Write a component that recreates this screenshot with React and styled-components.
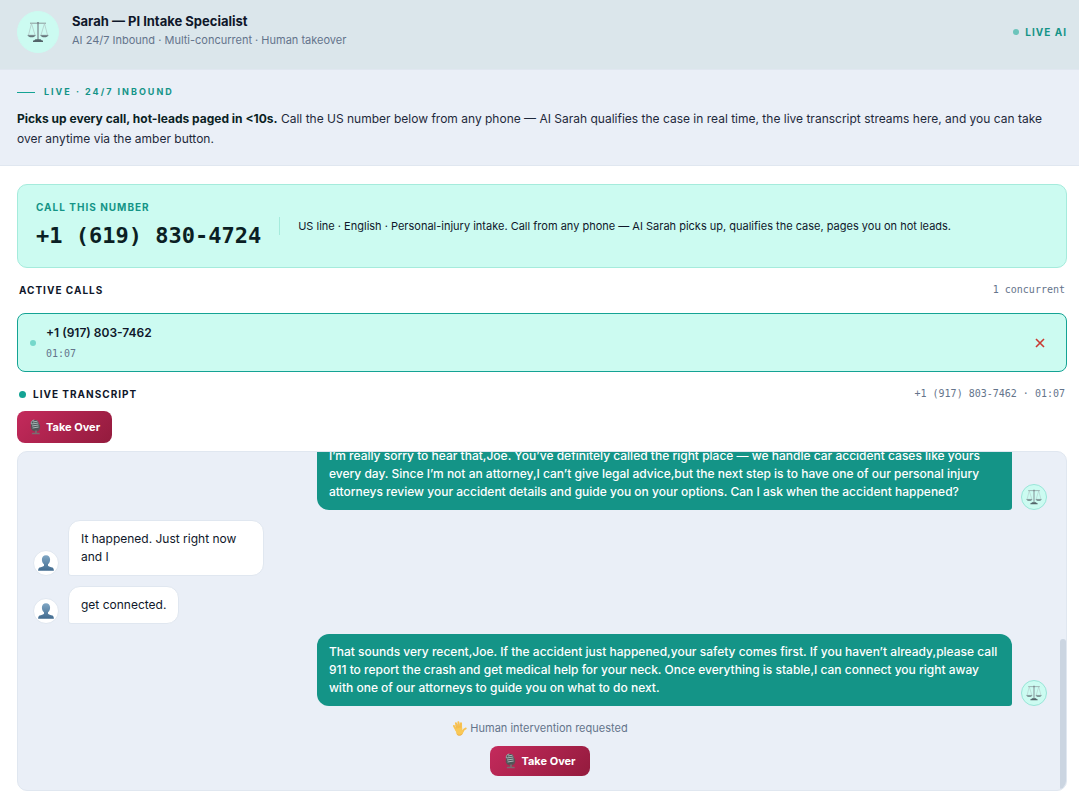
import React from "react";
import styled, { createGlobalStyle } from "styled-components";

const GlobalStyle = createGlobalStyle`
	:root {
		--accent: #149487;
		--accent-bright: #14a394;
		--mint: #ccfbf1;
		--mint-border: #a5ebdc;
		--surface: #eaeff7;
		--border: #e0e7f0;
		--dark: #0f172a;
		--muted: #64748b;
		--sans: Inter, "Open Sans", sans-serif;
		--mono: "DejaVu Sans Mono", "Liberation Mono", monospace;
	}

	* {
		box-sizing: border-box;
	}

	body {
		margin: 0;
		background: #fff;
		color: var(--dark);
		font-family: var(--sans);
		font-size: 12px;
		line-height: 18px;
	}

	h1, h2, p {
		margin: 0;
	}

	button {
		font-family: inherit;
		border: 0;
		cursor: pointer;
	}
`;

const Header = styled.header`
	display: flex;
	align-items: center;
	gap: 13px;
	padding: 11px 12px 16px 17px;
	background: #dbe6eb;
	border-bottom: 1px solid var(--border);
`;

const Avatar = styled.div`
	display: flex;
	align-items: center;
	justify-content: center;
	flex: none;
	width: ${(p) => p.$size}px;
	height: ${(p) => p.$size}px;
	border-radius: 50%;
	background: ${(p) => (p.$plain ? "#fff" : "var(--mint)")};
	border: 1px solid ${(p) => p.$border || "var(--mint)"};
`;

const Identity = styled.div`
	flex: 1;
	align-self: flex-start;

	h1 {
		font-size: 13px;
		font-weight: 700;
		line-height: 20px;
	}

	p {
		font-size: 11px;
		color: var(--muted);
	}
`;

const Label = styled.div`
	display: flex;
	align-items: center;
	font-size: ${(p) => (p.$wide ? 9 : 10)}px;
	font-weight: 700;
	line-height: ${(p) => p.$line || 16}px;
	letter-spacing: ${(p) => (p.$wide ? 2 : 1)}px;
	color: ${(p) => (p.$accent ? "var(--accent)" : "var(--dark)")};
	gap: ${(p) => p.$gap || 0}px;
`;

const Dot = styled.span`
	flex: none;
	width: ${(p) => p.$size || 6}px;
	height: ${(p) => p.$size || 6}px;
	border-radius: 50%;
	background: ${(p) => p.$color || "var(--accent-bright)"};
`;

const Dash = styled.span`
	width: 18px;
	height: 1px;
	background: var(--accent-bright);
`;

const Intro = styled.section`
	padding: 14px 12px 16px 17px;
	background: var(--surface);
	border-bottom: 1px solid var(--border);

	p {
		margin-top: 9px;
		line-height: 20px;
		color: #1e293b;
	}

	strong {
		color: #0b1f24;
	}
`;

const Content = styled.main`
	display: flex;
	flex-direction: column;
	padding: 18px 12px 14px 17px;
`;

const NumberCard = styled.section`
	display: flex;
	align-items: center;
	gap: 18px;
	padding: 15px 18px;
	background: var(--mint);
	border: 1px solid var(--mint-border);
	border-radius: 10px;
`;

const PhoneNumber = styled.div`
	margin-top: 6px;
	font-family: var(--mono);
	font-size: 22px;
	font-weight: 700;
	line-height: 32px;
	white-space: nowrap;
	color: #0b1f24;
`;

const Divider = styled.span`
	flex: none;
	width: 1px;
	height: 18px;
	background: var(--mint-border);
`;

const CardText = styled.p`
	font-size: 11px;
`;

const SectionHead = styled.div`
	display: flex;
	align-items: center;
	justify-content: space-between;
	padding: 0 2px;
	margin: 14px 0 ${(p) => p.$bottom}px;
`;

const Meta = styled.span`
	font-family: var(--mono);
	font-size: 10px;
	line-height: 16px;
	color: var(--muted);
`;

const CallRow = styled.div`
	display: flex;
	align-items: center;
	gap: 10px;
	padding: 9px 20px 9px 12px;
	background: var(--mint);
	border: 1px solid var(--accent-bright);
	border-radius: 8px;
`;

const CallInfo = styled.div`
	display: flex;
	flex-direction: column;
	flex: 1;
	gap: 3px;

	strong {
		font-weight: 600;
		line-height: 20px;
	}
`;

const CloseButton = styled.button`
	display: flex;
	padding: 0;
	background: none;
`;

const TakeOverButton = styled.button`
	display: flex;
	align-items: center;
	align-self: flex-start;
	gap: 4px;
	height: ${(p) => (p.$small ? 30 : 32)}px;
	padding: 0 ${(p) => (p.$small ? 14 : 12)}px;
	border-radius: 8px;
	background: linear-gradient(135deg, #c42a5c, #931b3d);
	color: #fff;
	font-size: 11px;
	font-weight: 700;
`;

const Transcript = styled.section`
	position: relative;
	display: flex;
	flex-direction: column;
	justify-content: flex-end;
	gap: 10px;
	height: 340px;
	margin-top: 8px;
	padding: 14px 19px 14px 15px;
	overflow: hidden;
	background: var(--surface);
	border: 1px solid var(--border);
	border-radius: 10px;
`;

const ScrollThumb = styled.div`
	position: absolute;
	right: 0;
	bottom: 0;
	width: 6px;
	height: 151px;
	border-radius: 3px;
	background: #cbd5e1;
`;

const Message = styled.div`
	display: flex;
	flex-direction: ${(p) => (p.$agent ? "row-reverse" : "row")};
	align-self: ${(p) => (p.$agent ? "flex-end" : "flex-start")};
	align-items: flex-end;
	gap: 9px;
	max-width: 72%;
`;

const Bubble = styled.p`
	padding: 9px 12px;
	border-radius: 12px;
`;

const AgentBubble = styled(Bubble)`
	background: var(--accent);
	color: #fff;
	font-weight: 500;
	border-bottom-right-radius: 3px;
`;

const CallerBubble = styled(Bubble)`
	max-width: 196px;
	background: #fff;
	border: 1px solid var(--border);
	border-bottom-left-radius: 3px;
`;

const Handoff = styled.div`
	display: flex;
	flex-direction: column;
	align-items: center;
	gap: 9px;
	padding-top: 3px;

	p {
		display: flex;
		align-items: center;
		gap: 3px;
		font-size: 11px;
		color: var(--muted);
	}

	button {
		align-self: center;
	}
`;

function ScalesIcon({ size }) {
	return (
		<svg width={size} height={size} viewBox="0 0 22 22" fill="none" aria-hidden="true">
			<path d="M3 2.2h16" stroke="#8b9a9c" strokeWidth="1" />
			<path d="M4.500 2.500 1.500 14M4.500 2.500 8 14M17.500 2.500 14 14M17.500 2.500 20.500 14" stroke="#a9babb" strokeWidth=".6" />
			<path d="M11 1v18" stroke="#8a9a9e" strokeWidth="1.500" />
			<circle cx="11" cy="2.200" r="1.100" fill="#7f8f93" />
			<path d="M.5 14h8.200c-.6 1.700-2 2.300-4.100 2.300S1 15.700.5 14ZM13.300 14h8.200c-.5 1.700-2 2.300-4.100 2.300s-3.500-.6-4.100-2.300Z" fill="#65777b" />
			<path d="M.7 14.200h7.800M13.500 14.200h7.800" stroke="#9eafb2" strokeWidth=".6" />
			<path d="M8.500 18.300h5l1.500 1.200h1V21H6v-1.500h1Z" fill="#536469" />
		</svg>
	);
}

function PersonIcon() {
	return (
		<svg width="16" height="16" viewBox="0 0 16 16" aria-hidden="true">
			<defs>
				<linearGradient id="bust" x1="0" y1="0" x2="0" y2="1">
					<stop offset="0" stopColor="#7fa6c4" />
					<stop offset="1" stopColor="#426b8f" />
				</linearGradient>
			</defs>
			<path
				fill="url(#bust)"
				d="M8 .2c2.600 0 4.200 1.900 4.100 4.500-.1 2-.9 3.500-2.100 4.600v1.400c.5 1 3 1.100 4.500 1.900.9.5 1.300 1.500 1.400 3.200H.1c.1-1.700.5-2.700 1.400-3.200 1.500-.8 4-.9 4.500-1.900V9.300C4.800 8.200 4 6.700 3.900 4.700 3.800 2.100 5.400.2 8 .2Z"
			/>
		</svg>
	);
}

function MicIcon() {
	return (
		<svg width="13" height="16" viewBox="0 0 13 16" fill="none" aria-hidden="true">
			<path d="M10.300 5.500c1 4.200-.4 6.500-3.300 6.500-2.800 0-4.500-1.500-5-4.500" stroke="#5d5558" strokeWidth="1.200" />
			<rect x="2" y="1" width="8" height="10.500" rx="4" fill="#4d5759" transform="rotate(-8 6 6)" />
			<path d="M2.300 5.200c-.3-2.600 1-4 3-4.200" stroke="#a3adae" strokeWidth="1" />
			<path d="m4 3 4.500-.8M2.800 5l6.600-1M3 7l6.600-1M3.500 9l6.200-1" stroke="#b3c0c1" strokeWidth=".9" />
			<path d="M7 11.500v2.500" stroke="#777173" strokeWidth="1.600" />
			<path d="M3.300 13.700h7l.7 1.600H2.600Z" fill="#7b6c71" />
		</svg>
	);
}

function HandIcon() {
	return (
		<svg width="15" height="15" viewBox="0 0 15 15" fill="none" aria-hidden="true">
			<path
				d="M4.200 9 2 5M5.700 8 3.900 2.300M7.300 7.500 6.400 1.300M9.100 7.500 9 2.200M10 11.300c1.300-2.300 2-3.700 3.700-3.900"
				stroke="#f8c250"
				strokeWidth="2"
				strokeLinecap="round"
			/>
			<path d="M3.300 7.800 10.100 6.500l.3 2.800 1.300.8c-.7 3.200-2.200 4.500-4.300 4.500-2.600 0-3.400-2.800-4.100-6.800Z" fill="#f9c856" />
			<path d="M4.700 7.300 3.300 3.900M6.200 6.800 5.200 2.600M8.100 6.600l-.3-4" stroke="#e5a43b" strokeWidth=".4" />
			<path d="M4.500 12.700c1.300 2 4.200 2.200 6 0" stroke="#e6a23a" strokeWidth=".7" />
		</svg>
	);
}

function CloseIcon() {
	return (
		<svg width="12" height="12" viewBox="0 0 12 12" aria-hidden="true">
			<path d="m2 2 8 8M10 2l-8 8" stroke="#c93a32" strokeWidth="1.600" />
		</svg>
	);
}

const messages = [
	{
		agent: true,
		text: "I’m really sorry to hear that,Joe. You’ve definitely called the right place — we handle car accident cases like yours every day. Since I’m not an attorney,I can’t give legal advice,but the next step is to have one of our personal injury attorneys review your accident details and guide you on your options. Can I ask when the accident happened?",
	},
	{ agent: false, text: "It happened. Just right now and I" },
	{ agent: false, text: "get connected." },
	{
		agent: true,
		text: "That sounds very recent,Joe. If the accident just happened,your safety comes first. If you haven’t already,please call 911 to report the crash and get medical help for your neck. Once everything is stable,I can connect you right away with one of our attorneys to guide you on what to do next.",
	},
];

function TakeOver({ small }) {
	return (
		<TakeOverButton type="button" $small={small}>
			<MicIcon />
			Take Over
		</TakeOverButton>
	);
}

function App() {
	const messageList = messages.map((message, index) => {
		return message.agent ? (
			<Message $agent key={index}>
				<Avatar $size={26} $border="#99e5d8">
					<ScalesIcon size={16} />
				</Avatar>
				<AgentBubble>{message.text}</AgentBubble>
			</Message>
		) : (
			<Message key={index}>
				<Avatar $size={26} $plain $border="var(--border)">
					<PersonIcon />
				</Avatar>
				<CallerBubble>{message.text}</CallerBubble>
			</Message>
		);
	});

	return (
		<>
			<GlobalStyle />
			<Header>
				<Avatar $size={42}>
					<ScalesIcon size={22} />
				</Avatar>
				<Identity>
					<h1>Sarah — PI Intake Specialist</h1>
					<p>AI 24/7 Inbound · Multi-concurrent · Human takeover</p>
				</Identity>
				<Label $accent $gap={6}>
					<Dot $color="#6cc4bb" />
					LIVE AI
				</Label>
			</Header>
			<Intro>
				<Label $accent $wide $gap={9}>
					<Dash />
					LIVE · 24/7 INBOUND
				</Label>
				<p>
					<strong>Picks up every call, hot-leads paged in &lt;10s.</strong> Call the US number below from any
					phone — AI Sarah qualifies the case in real time, the live transcript streams here, and you can take
					over anytime via the amber button.
				</p>
			</Intro>
			<Content>
				<NumberCard>
					<div>
						<Label $accent $line={14}>
							CALL THIS NUMBER
						</Label>
						<PhoneNumber>+1 (619) 830-4724</PhoneNumber>
					</div>
					<Divider />
					<CardText>
						US line · English · Personal-injury intake. Call from any phone — AI Sarah picks up, qualifies the
						case, pages you on hot leads.
					</CardText>
				</NumberCard>
				<SectionHead $bottom={15}>
					<Label as="h2">ACTIVE CALLS</Label>
					<Meta>1 concurrent</Meta>
				</SectionHead>
				<CallRow>
					<Dot $color="#75d8cb" />
					<CallInfo>
						<strong>+1 (917) 803-7462</strong>
						<Meta>01:07</Meta>
					</CallInfo>
					<CloseButton type="button" aria-label="End call">
						<CloseIcon />
					</CloseButton>
				</CallRow>
				<SectionHead $bottom={9}>
					<Label as="h2" $gap={7}>
						<Dot $size={7} />
						LIVE TRANSCRIPT
					</Label>
					<Meta>+1 (917) 803-7462 · 01:07</Meta>
				</SectionHead>
				<TakeOver />
				<Transcript>
					{messageList}
					<Handoff>
						<p>
							<HandIcon />
							Human intervention requested
						</p>
						<TakeOver small />
					</Handoff>
					<ScrollThumb />
				</Transcript>
			</Content>
		</>
	);
}

export default App;
